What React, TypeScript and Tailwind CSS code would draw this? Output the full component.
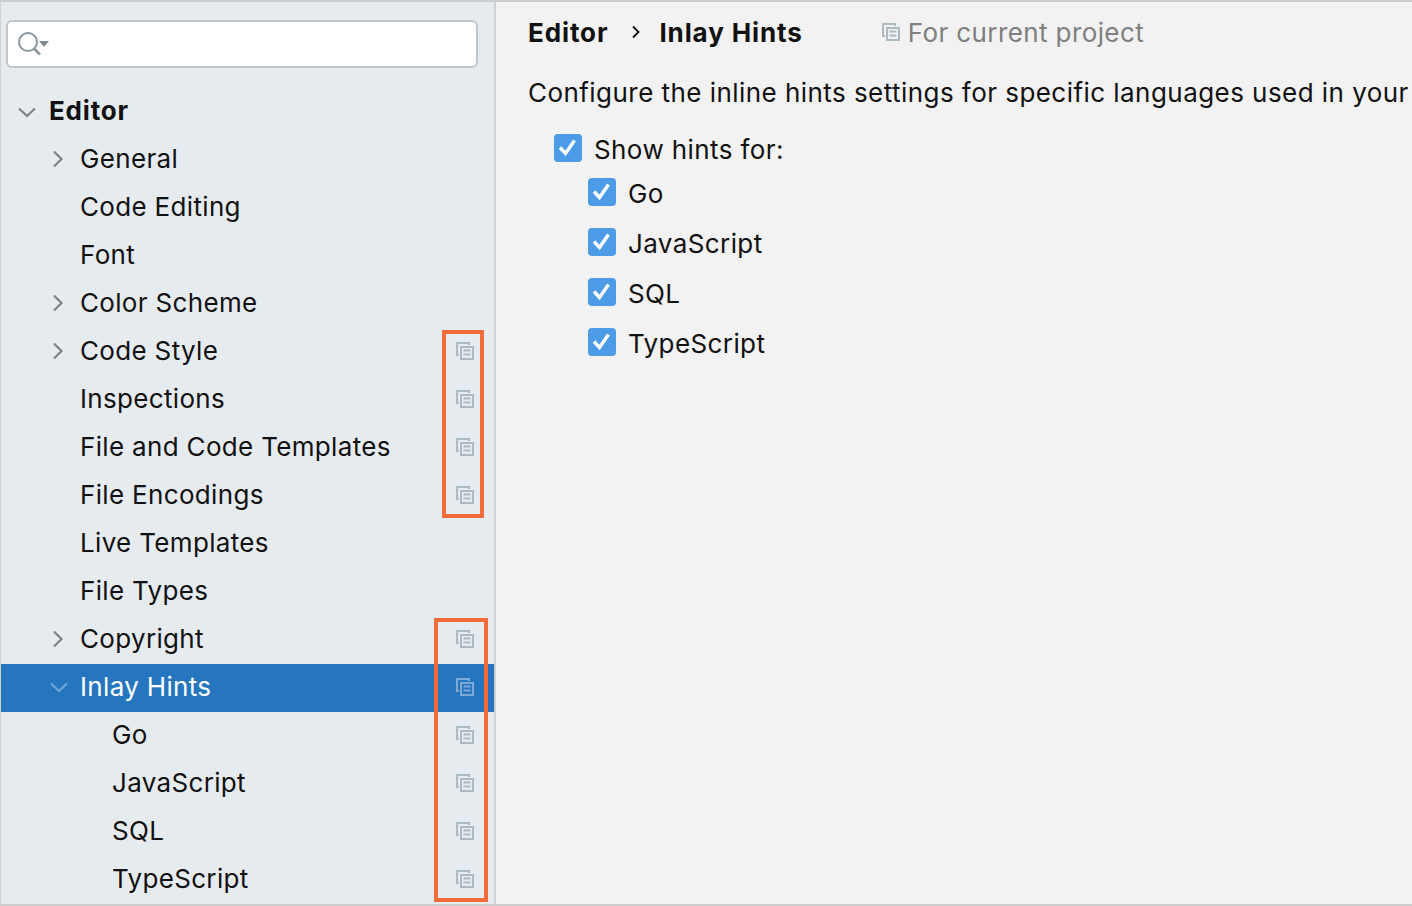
import React from "react";

function CopyIcon({ color = "#AEBAC2" }: { color?: string }) {
  return (
    <svg width="18" height="18" viewBox="0 0 18 18" fill="none" className="shrink-0 mb-[2px]">
      <path d="M13 3V1H1V13H3" stroke={color} strokeWidth="2" />
      <rect x="5" y="5" width="12" height="12" stroke={color} strokeWidth="2" />
      <path d="M7.5 8.5H14.5M7.5 12.5H14.5" stroke={color} strokeWidth="2" />
    </svg>
  );
}

function Chevron({ dir, color = "#7F8487" }: { dir: "right" | "down"; color?: string }) {
  return (
    <svg width="20" height="20" viewBox="0 0 20 20" fill="none" className="shrink-0">
      {dir === "right" ? (
        <path d="M5 2.5L12.5 10L5 17.5" stroke={color} strokeWidth="2.2" />
      ) : (
        <path d="M2 6.5L10 14L18 6.5" stroke={color} strokeWidth="2.2" />
      )}
    </svg>
  );
}

function Check({ label, className }: { label: string; className?: string }) {
  return (
    <div className={"flex items-center " + (className ?? "")}>
      <div className="w-7 h-7 mb-[2px] rounded-[4px] bg-[#4C9BE6] flex items-center justify-center shrink-0">
        <svg width="20" height="20" viewBox="0 0 20 20" fill="none">
          <path d="M2 9.5L7.5 15.5L16.5 2.5" stroke="#fff" strokeWidth="3.4" />
        </svg>
      </div>
      <span className="ml-3 text-[26px] tracking-[0.4px] text-[#111]">{label}</span>
    </div>
  );
}

type Row = { label: string; indent: number; chev?: "right" | "down"; copy?: boolean; selected?: boolean };

const rows: Row[] = [
  { label: "General", indent: 1, chev: "right" },
  { label: "Code Editing", indent: 1 },
  { label: "Font", indent: 1 },
  { label: "Color Scheme", indent: 1, chev: "right" },
  { label: "Code Style", indent: 1, chev: "right", copy: true },
  { label: "Inspections", indent: 1, copy: true },
  { label: "File and Code Templates", indent: 1, copy: true },
  { label: "File Encodings", indent: 1, copy: true },
  { label: "Live Templates", indent: 1 },
  { label: "File Types", indent: 1 },
  { label: "Copyright", indent: 1, chev: "right", copy: true },
  { label: "Inlay Hints", indent: 1, chev: "down", copy: true, selected: true },
  { label: "Go", indent: 2, copy: true },
  { label: "JavaScript", indent: 2, copy: true },
  { label: "SQL", indent: 2, copy: true },
  { label: "TypeScript", indent: 2, copy: true },
];

function TreeRow({ row }: { row: Row }) {
  return (
    <div
      className={
        "h-12 flex items-center justify-between pr-[20px] " +
        (row.selected ? "bg-[#2675BF] text-white" : "text-[#111]")
      }
    >
      <div className={"flex items-center " + (row.indent === 2 ? "pl-[111px]" : "pl-[79px]")}>
        <span className="text-[26px] tracking-[0.33px] relative mb-[3px]">
          {row.chev && (
            <span className="absolute top-[10px] -left-[31px]">
              <Chevron dir={row.chev} color={row.selected ? "#6FA3D6" : "#7F8487"} />
            </span>
          )}
          {row.label}
        </span>
      </div>
      {row.copy && <CopyIcon color={row.selected ? "#7FAAD6" : "#AEBAC2"} />}
    </div>
  );
}

export default function App() {
  return (
    <div
      className="w-[1412px] h-[906px] overflow-hidden flex bg-[#F2F2F2] border-t-2 border-b-2 border-[#CDCDCD] relative"
      style={{ fontFamily: "Inter, 'Noto Sans', sans-serif" }}
    >
      <aside className="w-[496px] shrink-0 bg-[#E6EBF0] border-r-2 border-l border-[#D1D1D1] flex flex-col">
        <div className="mt-[18px] ml-[5px] w-[472px] h-[48px] bg-white rounded-[6px] border-2 border-[#C2C5C9] flex items-center pl-[8px]">
          <svg width="36" height="28" viewBox="0 0 36 28" fill="none">
            <circle cx="12" cy="12" r="9" stroke="#8B979E" strokeWidth="2" />
            <path d="M18 18.5L24 24.5" stroke="#8B979E" strokeWidth="2.6" />
            <path d="M23 11H33L28 17Z" fill="#7F8B92" />
          </svg>
        </div>
        <div className="mt-[20px] h-12 flex items-center pl-[48px] relative">
          <span className="absolute left-[16px] top-[14px]">
            <Chevron dir="down" />
          </span>
          <span className="mb-[4px] text-[26px] font-bold tracking-[0.8px] text-[#111]">Editor</span>
        </div>
        {rows.map((r) => (
          <TreeRow key={r.label + r.indent} row={r} />
        ))}
      </aside>

      <main className="flex-1 min-w-0 pl-[32px] pt-[13px] overflow-hidden">
        <div className="h-9 flex items-center">
          <span className="mb-[2px] text-[26px] font-bold tracking-[0.9px] text-[#111]">Editor</span>
          <svg width="10" height="14" viewBox="0 0 10 14" fill="none" className="ml-[23px] mr-[18px] mb-[2px]">
            <path d="M2 1.5L7.5 7L2 12.5" stroke="#111" strokeWidth="1.8" />
          </svg>
          <span className="mb-[2px] text-[26px] font-bold tracking-[0.88px] text-[#111]">Inlay Hints</span>
          <span className="ml-[79px]">
            <CopyIcon />
          </span>
          <span className="mb-[2px] ml-2 text-[26px] tracking-[0.4px] text-[#7F7F7F]">For current project</span>
        </div>
        <p className="mt-[24px] text-[26px] leading-[36px] tracking-[0.45px] text-[#111] whitespace-nowrap">
          Configure the inline hints settings for specific languages used in your
        </p>
        <Check label="Show hints for:" className="ml-[26px] mt-[20px] h-9" />
        <div className="ml-[60px] mt-[8px] flex flex-col gap-[14px]">
          <Check label="Go" className="h-9" />
          <Check label="JavaScript" className="h-9" />
          <Check label="SQL" className="h-9" />
          <Check label="TypeScript" className="h-9" />
        </div>
      </main>

      <div className="absolute left-[442px] top-[328px] w-[42px] h-[188px] border-[4px] border-[#F26B38]" />
      <div className="absolute left-[434px] top-[616px] w-[54px] h-[284px] border-[4px] border-[#F26B38]" />
    </div>
  );
}
